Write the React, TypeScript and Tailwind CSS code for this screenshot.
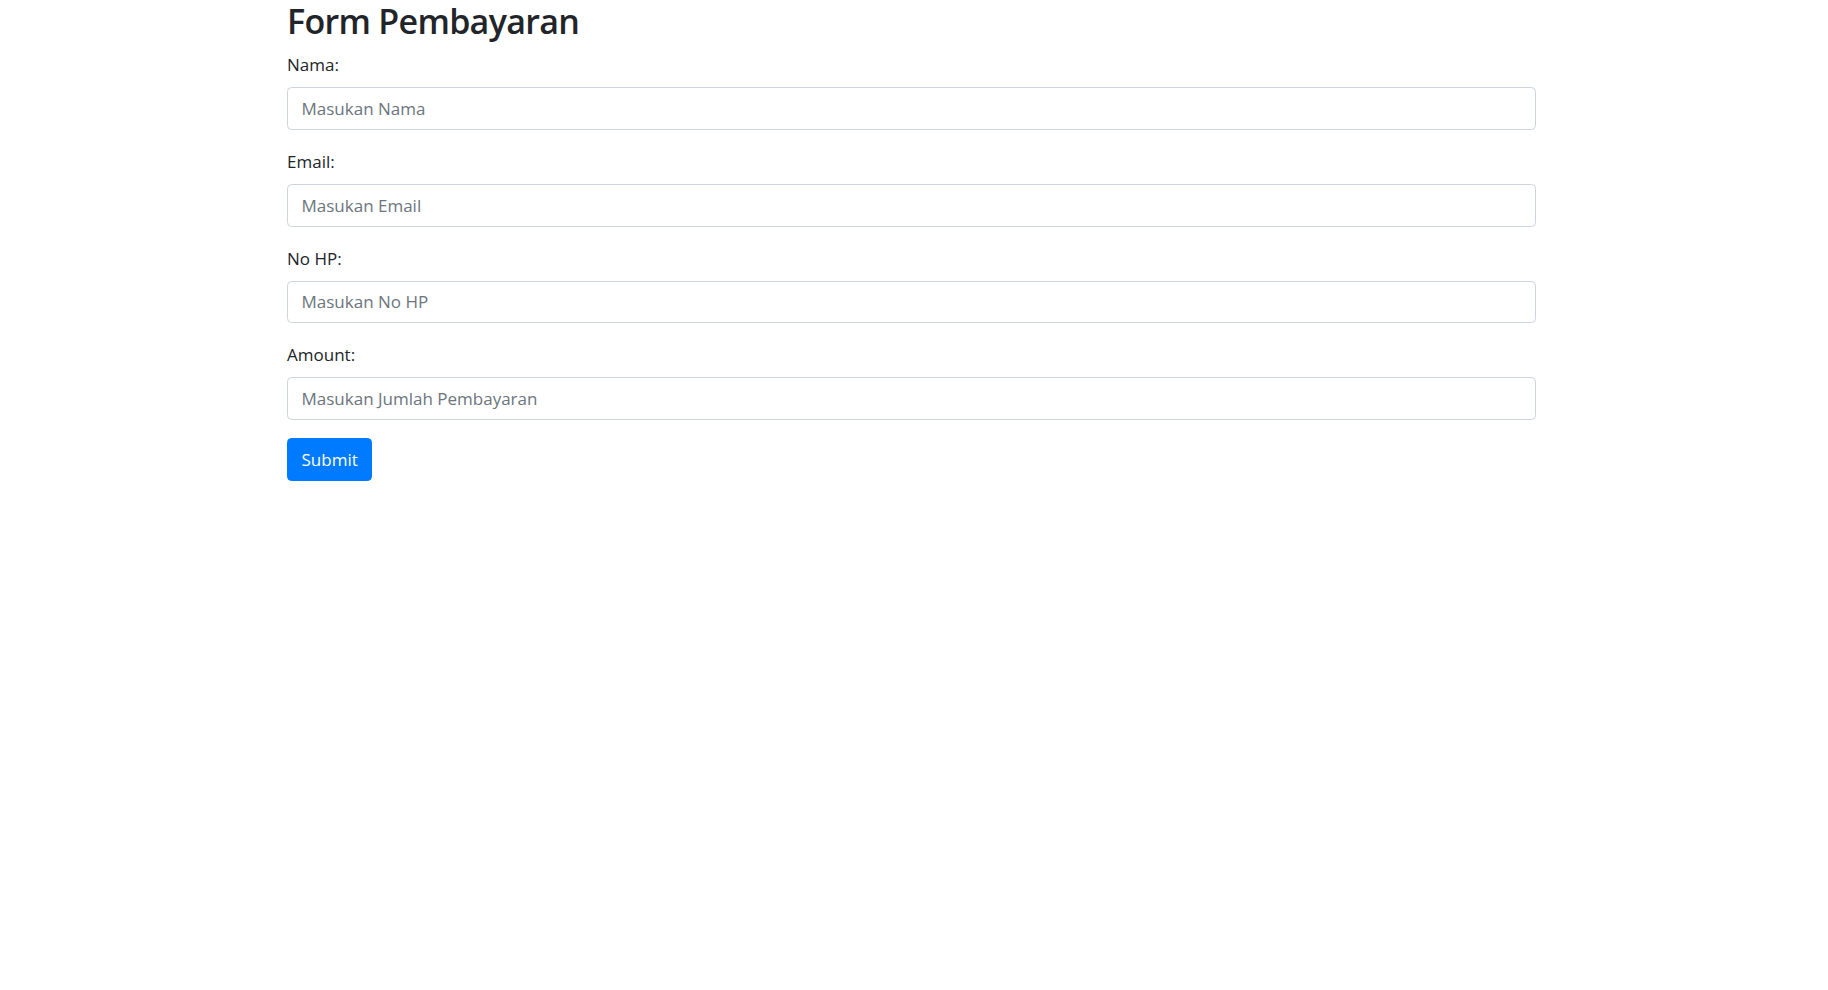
export default function App() {
    const fields = [
        { label: "Nama:", placeholder: "Masukan Nama", type: "text" },
        { label: "Email:", placeholder: "Masukan Email", type: "email" },
        { label: "No HP:", placeholder: "Masukan No HP", type: "text" },
        { label: "Amount:", placeholder: "Masukan Jumlah Pembayaran", type: "number" },
    ]

    return (
        <div className="min-h-screen bg-white text-[#212529] text-[17px] leading-[27px] font-['Open_Sans',sans-serif]">
            <div className="pl-[287px]">
                <div className="w-[1249px]">
                    <h2 className="text-[34px] leading-[43px] font-semibold tracking-[-0.7px] mb-[8px]">Form Pembayaran</h2>
                    <form onSubmit={(e) => e.preventDefault()}>
                        {fields.map((f) => (
                            <div key={f.label} className="mb-[18px]">
                                <label className="inline-block mb-[9px]">{f.label}</label>
                                <input
                                    type={f.type}
                                    placeholder={f.placeholder}
                                    className="block w-full h-[42.75px] px-[13.5px] py-[6.75px] border border-[#ced4da] rounded-[4.5px] bg-white text-[#495057] placeholder:text-[#6c757d] outline-none"
                                />
                            </div>
                        ))}
                        <button
                            type="submit"
                            className="h-[42.75px] px-[13.5px] border border-[#007bff] bg-[#007bff] text-white rounded-[4.5px]"
                        >
                            Submit
                        </button>
                    </form>
                </div>
            </div>
        </div>
    )
}
